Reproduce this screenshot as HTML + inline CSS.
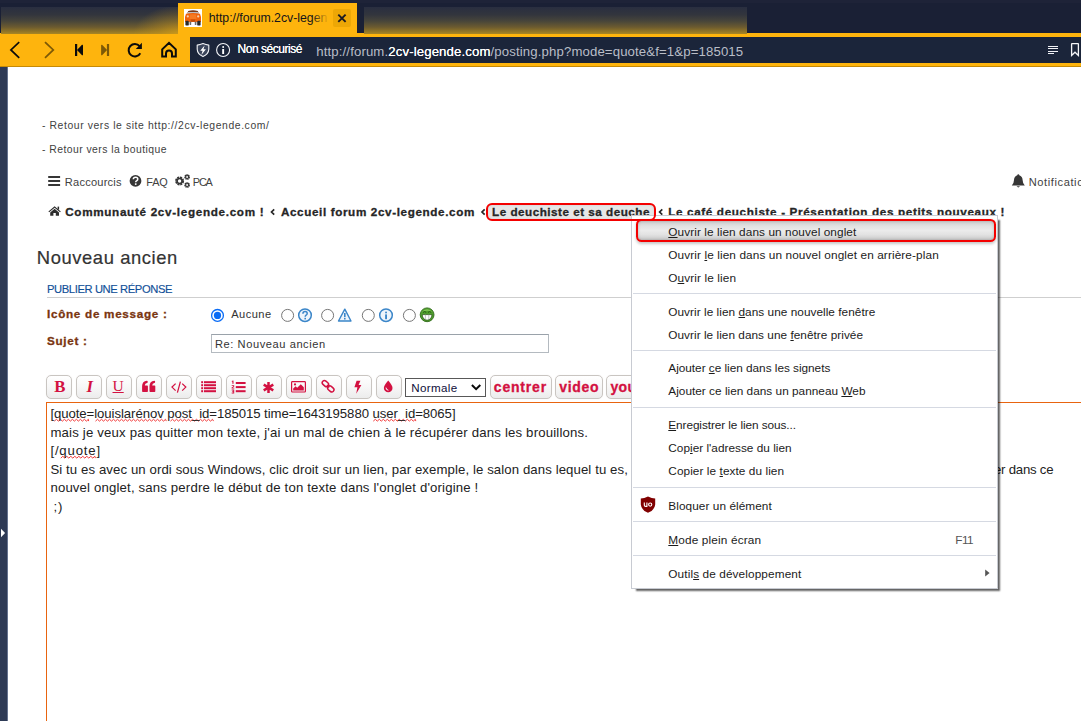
<!DOCTYPE html>
<html lang="fr">
<head>
<meta charset="utf-8">
<title>forum.2cv-legende.com - Nouveau ancien</title>
<style>
html,body{margin:0;padding:0;}
body{width:1081px;height:721px;overflow:hidden;position:relative;background:#fff;font-family:"Liberation Sans",sans-serif;color:#000;}
.abs{position:absolute;}
svg.abs{overflow:visible;}
.t{position:absolute;white-space:nowrap;line-height:1;}
u{text-decoration:underline;text-underline-offset:.6px;text-decoration-thickness:1px;}
.sq{text-decoration:underline wavy #f03030;text-decoration-thickness:1px;text-underline-offset:2.5px;text-decoration-skip-ink:none;}
/* ---------- browser chrome ---------- */
#tabbar{left:0;top:0;width:1081px;height:33px;background:linear-gradient(#1e2338 0,#1e2338 3px,#1a2035 3px,#1a2035 100%);}
#toolbar{left:0;top:33px;width:1081px;height:33px;background:#feb40d;border-bottom:1px solid #c68a06;}
#urlbar{left:190px;top:37px;width:891px;height:26px;background:#1b253a;}
#tab{left:178px;top:3px;width:179px;height:31px;background:#feb40d;}
.blur{background:linear-gradient(to bottom,#292e40 0%,#32353d 28%,#47453a 52%,#6b5a30 74%,#8f7427 90%,#a98623 100%);}
#blur1{left:1px;top:7px;width:177.5px;height:27px;}
#blur1:after{content:"";position:absolute;right:0;top:0;width:60px;height:27px;background:radial-gradient(ellipse 46px 30px at 100% 105%,rgba(215,160,22,.75) 0%,rgba(205,152,24,.4) 45%,rgba(200,150,25,0) 100%);}
#blur2{left:364px;top:7px;width:383px;height:27px;}
#closebg{left:333px;top:9px;width:18px;height:18px;background:#eda706;border-radius:2px;}
#favicon{left:184px;top:9px;width:18px;height:18px;background:#fff;}
#tabfade{left:312px;top:8px;width:20px;height:20px;background:linear-gradient(to right,rgba(254,180,13,0),#feb40d 85%);}
/* ---------- page ---------- */
#side{left:0;top:67px;width:7px;height:654px;background:#2e3a55;border-right:1px solid #66738f;}
#hline{left:47px;top:297px;width:1040px;height:1px;background:#cfcfcf;}
#subj{left:211px;top:334px;width:336px;height:17px;border:1px solid #b4bac0;border-top-color:#9aa2aa;background:#fff;}
.radio{position:absolute;width:12px;height:12px;border:1px solid #767676;border-radius:50%;background:#fff;box-sizing:border-box;}
/* ---------- editor ---------- */
.btn{position:absolute;top:375px;height:24px;width:26px;box-sizing:border-box;border:1px solid #c9c5c1;border-radius:5px;background:linear-gradient(#ffffff 0%,#f7f7f7 50%,#ececec 100%);box-shadow:0 0 1px 0 #e8e6e4;}
#sel{left:405px;top:378px;width:81px;height:19px;box-sizing:border-box;border:1px solid #585858;border-radius:0;background:#fff;}
#ta{left:46px;top:402px;width:1100px;height:400px;border:1px solid #e8640f;background:#fff;}
/* ---------- context menu ---------- */
#menu{left:631px;top:215px;width:367px;height:374px;box-sizing:border-box;background:#fff;border:1px solid #c8cbd2;box-shadow:3.5px 3.5px 1.6px -1.5px rgba(0,0,0,.6);}
.sep{position:absolute;left:633px;width:363px;height:1px;background:#d5d9e2;}
.red{position:absolute;border:2px solid #f40000;box-sizing:border-box;}
#red1{left:486px;top:202.6px;width:170px;height:18.6px;border-radius:6px;}
#red1fill{left:487px;top:203.6px;width:168px;height:16.6px;border-radius:5px;background:#e6e6e6;box-shadow:inset 0 0 3px rgba(0,0,0,.22);}
#red2{left:636px;top:219.2px;width:359.7px;height:23px;border-radius:5.5px;background:linear-gradient(#cdcdcd 0%,#e2e2e2 28%,#ebebeb 50%,#e2e2e2 72%,#c9c9c9 100%);box-shadow:inset 0 0 3px 0 rgba(0,0,0,.22),0 1.5px 3px rgba(0,0,0,.22);}
</style>
</head>
<body>

<!-- ================= browser chrome ================= -->
<div class="abs" id="tabbar"></div>
<div class="abs" id="toolbar"></div>
<div class="abs blur" id="blur1"></div>
<div class="abs blur" id="blur2"></div>
<div class="abs" id="tab"></div>
<div class="abs" id="favicon"></div>
<div class="abs" id="closebg"></div>
<div class="abs" id="urlbar"></div>
<svg class="abs" style="left:0;top:0" width="1081" height="70" viewBox="0 0 1081 70">
 <!-- back / forward -->
 <path d="M18.6 42.6 L10.9 49.9 L18.6 57.2" fill="none" stroke="#0b0b0b" stroke-width="1.7" stroke-linecap="square"/>
 <path d="M45.6 42.6 L53.3 49.9 L45.6 57.2" fill="none" stroke="#7d5906" stroke-width="1.7" stroke-linecap="square"/>
 <!-- rewind / fast forward -->
 <rect x="75" y="44" width="2.2" height="12" fill="#0b0b0b"/>
 <path d="M77 50 L82 44.8 Q83 44.4 83 45.6 L83 54.4 Q83 55.6 82 55.2 Z" fill="#0b0b0b"/>
 <rect x="106.9" y="44" width="2.2" height="12" fill="#7d5906"/>
 <path d="M107.1 50 L102.1 44.8 Q101.1 44.4 101.1 45.6 L101.1 54.4 Q101.1 55.6 102.1 55.2 Z" fill="#7d5906"/>
 <!-- reload -->
 <path d="M139.6 46.2 A6.2 6.2 0 1 0 140.3 53.2" fill="none" stroke="#0b0b0b" stroke-width="2"/>
 <path d="M141.9 42.8 L141.9 48.9 L135.8 48.9 Z" fill="#0b0b0b"/>
 <!-- home -->
 <path d="M162.2 56.6 L162.2 49.4 L169 42.9 L175.8 49.4 L175.8 56.6 L172 56.6 L172 53.4 A3 3 0 0 0 166 53.4 L166 56.6 Z" fill="none" stroke="#0b0b0b" stroke-width="2" stroke-linejoin="miter"/>
 <!-- favicon car -->
 <g>
  <path d="M188.2 11 Q193 9.4 197.8 11 L198.6 13 L187.4 13 Z" fill="#7b3a18"/>
  <path d="M187.8 11.9 L198.2 11.9 L199 14.2 L187 14.2 Z" fill="#b9bdc0"/>
  <path d="M186 13.8 Q193 12.2 200 13.8 Q201.8 17 201 22 L185 22 Q184.2 17 186 13.8 Z" fill="#f0620c"/>
  <path d="M190 14.6 Q193 13.8 196 14.6 L196.6 19 L189.4 19 Z" fill="#f57a22"/>
  <circle cx="187.8" cy="16.4" r="1.1" fill="#f3d4b4"/>
  <circle cx="198.2" cy="16.4" r="1.1" fill="#f3d4b4"/>
  <rect x="185.4" y="20.8" width="3.4" height="4.8" rx="1.2" fill="#2a2a2a"/>
  <rect x="197.2" y="20.8" width="3.4" height="4.8" rx="1.2" fill="#2a2a2a"/>
  <rect x="189.6" y="21.6" width="1.6" height="3.4" rx=".6" fill="#6d6d6d"/>
  <rect x="194.8" y="21.6" width="1.6" height="3.4" rx=".6" fill="#6d6d6d"/>
  <path d="M190.8 19.6 L195.2 19.6 L194.7 21.8 L191.3 21.8 Z" fill="#c04c08"/>
 </g>
 <!-- tab close -->
 <path d="M338.3 14.6 L345.6 21.9 M345.6 14.6 L338.3 21.9" stroke="#1c1b22" stroke-width="1.9" fill="none"/>
 <!-- shield -->
 <path d="M203 43.6 Q206 44.9 208.8 45.1 L208.8 49.2 Q208.6 54 203 56.6 Q197.4 54 197.2 49.2 L197.2 45.1 Q200 44.9 203 43.6 Z" fill="#3b455b" stroke="#f4f5f8" stroke-width="1.1" stroke-linejoin="round"/>
 <path d="M204.6 45.4 L200.2 50.8 L202.6 50.8 L201.4 55 L205.9 49.2 L203.5 49.2 Z" fill="#fff"/>
 <!-- info -->
 <circle cx="223.1" cy="50" r="6.5" fill="none" stroke="#f4f5f8" stroke-width="1.1"/>
 <rect x="222.2" y="46.1" width="1.9" height="1.9" rx=".9" fill="#fff"/>
 <rect x="222.2" y="49" width="1.9" height="5" fill="#fff"/>
 <!-- reader view -->
 <g fill="#f0f1f5" shape-rendering="crispEdges">
 <rect x="1048" y="46" width="10" height="1"/>
 <rect x="1048" y="48" width="10" height="1"/>
 <rect x="1048" y="51" width="10" height="1"/>
 <rect x="1048" y="53" width="6" height="1"/>
 </g>
 <!-- bookmark -->
 <path d="M1071.6 55.4 L1071.6 44 Q1071.6 43.6 1072 43.6 L1078 43.6 Q1078.4 43.6 1078.4 44 L1078.4 55.4 L1075 52.2 Z" fill="none" stroke="#f4f5f8" stroke-width="1.3" stroke-linejoin="miter"/>
</svg>

<span class="t" style="left:208.70px;top:12.00px;font-size:12.3px;letter-spacing:-0.014px;color:#15141a;">http://forum.2cv-legen</span>
<span class="t" style="left:237.50px;top:43.00px;font-size:12.0px;letter-spacing:-0.460px;color:#fff;text-shadow:0 0 .4px #fff;">Non sécurisé</span>
<span class="t" style="left:316.30px;top:44.80px;font-size:13.2px;letter-spacing:0.124px;"><span style="color:#b9bdc7">http://forum.</span><span style="color:#fff;text-shadow:0 0 .5px #fff">2cv-legende.com</span><span style="color:#b9bdc7">/posting.php?mode=quote&amp;f=1&amp;p=185015</span></span>
<div class="abs" id="tabfade"></div>

<!-- ================= page ================= -->
<div class="abs" id="side"></div>
<div class="abs" id="hline"></div>
<div class="abs" id="subj"></div>
<div class="abs" id="ta"></div>
<div class="btn" style="left:46px"></div>
<div class="btn" style="left:76px"></div>
<div class="btn" style="left:106px"></div>
<div class="btn" style="left:136px"></div>
<div class="btn" style="left:166px"></div>
<div class="btn" style="left:196px"></div>
<div class="btn" style="left:226px"></div>
<div class="btn" style="left:256px"></div>
<div class="btn" style="left:286px"></div>
<div class="btn" style="left:316px"></div>
<div class="btn" style="left:346px"></div>
<div class="btn" style="left:376px"></div>
<div class="abs" id="sel"></div>
<div class="btn" style="left:490px;width:62px"></div>
<div class="btn" style="left:555px;width:47.5px"></div>
<div class="btn" style="left:606px;width:67px"></div>
<div class="abs" id="red1fill"></div>
<svg class="abs" style="left:0;top:0" width="1081" height="721" viewBox="0 0 1081 721">
 <!-- sidebar toggle arrow -->
 <path d="M1 528.8 L5.1 533 L1 537.3 Z" fill="#fff"/>
 <!-- hamburger -->
 <g fill="#363636">
  <rect x="48.2" y="176" width="11.9" height="2"/>
  <rect x="48.2" y="180" width="11.9" height="2"/>
  <rect x="48.2" y="184" width="11.9" height="2"/>
 </g>
 <!-- FAQ ? -->
 <circle cx="135.5" cy="180.9" r="5.9" fill="#363636"/>
 <path d="M133.3 179.3 Q133.4 177.3 135.6 177.3 Q137.8 177.3 137.8 179.1 Q137.8 180.2 136.6 180.9 Q135.7 181.4 135.7 182.3" fill="none" stroke="#fff" stroke-width="1.5"/>
 <rect x="134.9" y="183.3" width="1.6" height="1.6" fill="#fff"/>
 <!-- cogs -->
 <g fill="none" stroke="#363636">
  <circle cx="179.6" cy="181" r="3.4" stroke-width="2.2" stroke-dasharray="1.9 0.77" />
  <circle cx="179.6" cy="181" r="2.5" stroke-width="1.6"/>
  <circle cx="187.1" cy="177" r="2.1" stroke-width="1.5" stroke-dasharray="1.25 0.4"/>
  <circle cx="187.1" cy="177" r="1.5" stroke-width="1.2"/>
  <circle cx="187.1" cy="185" r="2.1" stroke-width="1.5" stroke-dasharray="1.25 0.4"/>
  <circle cx="187.1" cy="185" r="1.5" stroke-width="1.2"/>
 </g>
 <!-- bell -->
 <path d="M1018.3 174.2 Q1019.3 174.2 1019.3 175.3 Q1022.4 176.2 1022.6 180 Q1022.8 184 1024.8 185.6 L1011.8 185.6 Q1013.8 184 1014 180 Q1014.2 176.2 1017.3 175.3 Q1017.3 174.2 1018.3 174.2 Z" fill="#363636"/>
 <path d="M1016.6 186.3 Q1018.3 188.6 1020 186.3 Z" fill="#363636"/>
 <!-- breadcrumb home -->
 <path d="M54.6 206.2 L60.8 211.4 L60 212.3 L54.6 207.8 L49.2 212.3 L48.4 211.4 Z" fill="#2d2d2d"/>
 <path d="M54.6 208.7 L59 212.4 L59 215.8 L55.8 215.8 L55.8 213 L53.4 213 L53.4 215.8 L50.2 215.8 L50.2 212.4 Z" fill="#2d2d2d"/>
 <rect x="57.6" y="206.6" width="1.5" height="3" fill="#2d2d2d"/>

 <!-- radios -->
 <circle cx="217.5" cy="315.4" r="5.9" fill="#fff" stroke="#0a6cf5" stroke-width="1.3"/>
 <circle cx="217.5" cy="315.4" r="3.6" fill="#0a6cf5"/>
 <g fill="#fff" stroke="#767676" stroke-width="1">
  <circle cx="287.6" cy="315.4" r="6"/>
  <circle cx="327.6" cy="315.4" r="6"/>
  <circle cx="368.3" cy="315.4" r="6"/>
  <circle cx="409.4" cy="315.4" r="6"/>
 </g>
 <!-- ? topic icon -->
 <circle cx="305" cy="315.2" r="6.3" fill="#eef4fb" stroke="#3b86c9" stroke-width="1.5"/>
 <path d="M302.9 313.7 Q303 311.6 305.1 311.6 Q307.2 311.6 307.2 313.4 Q307.2 314.5 306.1 315.2 Q305.2 315.8 305.2 316.7" fill="none" stroke="#3b86c9" stroke-width="1.5"/>
 <rect x="304.4" y="317.8" width="1.6" height="1.6" fill="#3b86c9"/>
 <!-- warning -->
 <path d="M344.8 309.2 L351 321 L338.5 321 Z" fill="#eef4fb" stroke="#3b86c9" stroke-width="1.4" stroke-linejoin="round"/>
 <rect x="344" y="313" width="1.6" height="4.2" fill="#3b86c9"/>
 <rect x="344" y="318" width="1.6" height="1.5" fill="#3b86c9"/>
 <!-- info -->
 <circle cx="386" cy="315.2" r="6.3" fill="#eef4fb" stroke="#3b86c9" stroke-width="1.5"/>
 <rect x="385.1" y="311.5" width="1.9" height="1.9" rx=".9" fill="#3b86c9"/>
 <rect x="385.1" y="314.4" width="1.9" height="4.8" fill="#3b86c9"/>
 <!-- green smiley -->
 <circle cx="427.1" cy="314.8" r="6.9" fill="#4f9d2c" stroke="#2f6a18" stroke-width=".9"/>
 <path d="M421.6 312 Q427.1 306.5 432.6 312 Q427.1 309.6 421.6 312 Z" fill="#8ed060" opacity=".8"/>
 <path d="M423 312.4 Q424.6 310.8 426.2 312.4 M428 312.4 Q429.6 310.8 431.2 312.4" fill="none" stroke="#234f10" stroke-width=".9"/>
 <path d="M422.2 314.6 L432 314.6 Q431.6 319.8 427.1 320.2 Q422.6 319.8 422.2 314.6 Z" fill="#fff" stroke="#234f10" stroke-width=".7"/>
 <path d="M425.4 314.6 L425.4 319.8 M428.8 314.6 L428.8 319.8" stroke="#9a9a9a" stroke-width=".6"/>

 <!-- ===== toolbar button icons ===== -->
 <g fill="#d31141">
  <!-- quote -->
  <path d="M142.1 391.2 L142.1 386 Q142.2 381.4 146.9 380.8 Q147.7 380.8 147.7 381.6 L147.7 382.2 Q147.7 382.8 147 382.9 Q144.9 383.3 144.8 385.5 L147.2 385.5 Q147.9 385.5 147.9 386.2 L147.9 391.2 Q147.9 391.9 147.2 391.9 L142.8 391.9 Q142.1 391.9 142.1 391.2 Z"/>
  <path d="M149.5 391.2 L149.5 386 Q149.6 381.4 154.3 380.8 Q155.1 380.8 155.1 381.6 L155.1 382.2 Q155.1 382.8 154.4 382.9 Q152.3 383.3 152.2 385.5 L154.6 385.5 Q155.3 385.5 155.3 386.2 L155.3 391.2 Q155.3 391.9 154.6 391.9 L150.2 391.9 Q149.5 391.9 149.5 391.2 Z"/>
  <!-- list -->
  <rect x="201.2" y="381.2" width="1.9" height="2"/><rect x="204" y="381.2" width="12" height="2"/>
  <rect x="201.2" y="384.2" width="1.9" height="2"/><rect x="204" y="384.2" width="12" height="2"/>
  <rect x="201.2" y="387.2" width="1.9" height="2"/><rect x="204" y="387.2" width="12" height="2"/>
  <rect x="201.2" y="390.2" width="1.9" height="2"/><rect x="204" y="390.2" width="12" height="2"/>
  <!-- numbered list -->
  <rect x="235.8" y="382" width="9.8" height="2"/>
  <rect x="235.8" y="386.1" width="9.8" height="2"/>
  <rect x="235.8" y="390.2" width="9.8" height="2"/>
  <rect x="232.4" y="380.6" width="1.1" height="3.2"/><rect x="231.8" y="380.9" width="1" height=".9"/>
  <path d="M231.7 385.2 L234.2 385.2 L234.2 386.7 L232.6 387.8 L234.3 387.8 L234.3 388.6 L231.6 388.6 L231.6 387.6 L233.3 386.4 L233.3 386 L231.7 386 Z"/>
  <path d="M231.7 389.6 L234.2 389.6 L234.2 393.4 L231.7 393.4 L231.7 392.6 L233.3 392.6 L233.3 391.8 L232.2 391.8 L232.2 391.1 L233.3 391.1 L233.3 390.4 L231.7 390.4 Z"/>
  <!-- bolt -->
  <path d="M356.6 380.8 L360.4 380.8 L358.6 385 L361.4 385 L356.2 393.8 L357.4 387.2 L354.4 387.2 Z"/>
  <!-- drop -->
  <path d="M388.2 380.6 Q392.5 385.6 392.5 388 A4.3 4.3 0 0 1 383.9 388 Q383.9 385.6 388.2 380.6 Z"/>
 </g>
 <path d="M386 388 Q386 390 388 390.2" fill="none" stroke="#fff" stroke-width="1" stroke-linecap="round"/>
 <!-- code </> -->
 <path d="M175.6 383.6 L172 387.1 L175.6 390.6 M182.2 383.6 L185.8 387.1 L182.2 390.6 M180.4 381.6 L177.4 392.6" fill="none" stroke="#d31141" stroke-width="1.25"/>
 <!-- asterisk -->
 <path d="M268.5 382 L268.5 393 M263.7 384.7 L273.3 390.3 M273.3 384.7 L263.7 390.3" fill="none" stroke="#d31141" stroke-width="2.5"/>
 <!-- image -->
 <rect x="291.6" y="381.7" width="13.8" height="10.3" rx=".8" fill="none" stroke="#d31141" stroke-width="1.2"/>
 <path d="M293.2 390.4 L293.2 388.6 L295.6 386.2 L297.2 387.8 L300.8 384.2 L303.8 387.2 L303.8 390.4 Z" fill="#d31141"/>
 <circle cx="295" cy="384.4" r="1.1" fill="#d31141"/>
 <!-- link -->
 <g fill="none" stroke="#d31141" stroke-width="1.45">
  <rect x="-2.2" y="-3.5" width="4.4" height="7" rx="2.2" transform="translate(325.4 383.6) rotate(-48)"/>
  <rect x="-2.2" y="-3.5" width="4.4" height="7" rx="2.2" transform="translate(330.8 388.9) rotate(-48)"/>
 </g>
 <path d="M326.9 385.1 L329.3 387.4" stroke="#d31141" stroke-width="1.5" fill="none"/>
 <!-- select chevron -->
 <path d="M471.9 385 L476.1 389.2 L480.3 385" fill="none" stroke="#0a0a0a" stroke-width="2"/>
 <!-- breadcrumb chevrons -->
 <path d="M274.2 209.3 L271.5 212 L274.2 214.7" fill="none" stroke="#262626" stroke-width="1.7"/>
 <path d="M484.7 209.3 L482.0 212 L484.7 214.7" fill="none" stroke="#262626" stroke-width="1.7"/>
 <path d="M662.3 209.3 L659.6 212 L662.3 214.7" fill="none" stroke="#262626" stroke-width="1.7"/>
 <!-- spellcheck squiggles -->
 <path d="M54.4 421.1 L56.4 419.3 L58.4 421.1 L60.4 419.3 L62.4 421.1 L64.4 419.3 L66.4 421.1 L68.4 419.3 L70.4 421.1 L72.4 419.3 L74.4 421.1 L76.4 419.3 L78.4 421.1 L80.4 419.3 L82.4 421.1 L84.4 419.3 L86.4 421.1 L88.4 419.3 L88.6 421.1" fill="none" stroke="#f23a3a" stroke-width="1" stroke-linejoin="round"/>
 <path d="M95.5 421.1 L97.5 419.3 L99.5 421.1 L101.5 419.3 L103.5 421.1 L105.5 419.3 L107.5 421.1 L109.5 419.3 L111.5 421.1 L113.5 419.3 L115.5 421.1 L117.5 419.3 L119.5 421.1 L121.5 419.3 L123.5 421.1 L125.5 419.3 L127.5 421.1 L129.5 419.3 L131.5 421.1 L133.5 419.3 L135.5 421.1 L137.5 419.3 L139.5 421.1 L141.5 419.3 L143.5 421.1 L145.5 419.3 L147.5 421.1 L149.5 419.3 L151.5 421.1 L153.5 419.3 L155.5 421.1 L157.5 419.3 L159.5 421.1 L161.5 419.3 L163.5 421.1 L165.5 419.3 L166.3 421.1" fill="none" stroke="#f23a3a" stroke-width="1" stroke-linejoin="round"/>
 <path d="M170.5 421.1 L172.5 419.3 L174.5 421.1 L176.5 419.3 L178.5 421.1 L180.5 419.3 L182.5 421.1 L184.5 419.3 L186.5 421.1 L188.5 419.3 L190.5 421.1 L192.5 419.3 L194.5 421.1 L196.5 419.3 L198.5 421.1 L200.5 419.3 L202.5 421.1 L204.5 419.3 L206.5 421.1 L208.5 419.3 L210.5 421.1 L212.5 419.3 L213.5 421.1" fill="none" stroke="#f23a3a" stroke-width="1" stroke-linejoin="round"/>
 <path d="M373.3 421.1 L375.3 419.3 L377.3 421.1 L379.3 419.3 L381.3 421.1 L383.3 419.3 L385.3 421.1 L387.3 419.3 L389.3 421.1 L391.3 419.3 L393.3 421.1 L395.3 419.3 L397.3 421.1 L399.3 419.3 L401.3 421.1 L403.3 419.3 L405.3 421.1 L407.3 419.3 L409.3 421.1 L411.3 419.3 L413.3 421.1 L415.3 419.3 L415.8 421.1" fill="none" stroke="#f23a3a" stroke-width="1" stroke-linejoin="round"/>
 <path d="M60.8 458.1 L62.8 456.3 L64.8 458.1 L66.8 456.3 L68.8 458.1 L70.8 456.3 L72.8 458.1 L74.8 456.3 L76.8 458.1 L78.8 456.3 L80.8 458.1 L82.8 456.3 L84.8 458.1 L86.8 456.3 L88.8 458.1 L90.8 456.3 L92.8 458.1 L94.8 456.3 L95.5 458.1" fill="none" stroke="#f23a3a" stroke-width="1" stroke-linejoin="round"/>
</svg>

<span class="t" style="left:42.00px;top:120.70px;font-size:10.4px;letter-spacing:0.589px;color:#414141;">- Retour vers le site http://2cv-legende.com/</span>
<span class="t" style="left:42.00px;top:144.80px;font-size:10.4px;letter-spacing:0.446px;color:#414141;">- Retour vers la boutique</span>
<span class="t" style="left:64.80px;top:176.80px;font-size:11.1px;letter-spacing:0.209px;color:#414141;">Raccourcis</span>
<span class="t" style="left:146.20px;top:176.80px;font-size:10.9px;letter-spacing:-0.107px;color:#414141;">FAQ</span>
<span class="t" style="left:192.80px;top:176.80px;font-size:10.9px;letter-spacing:-1.164px;color:#414141;">PCA</span>
<span class="t" style="left:1028.70px;top:176.80px;font-size:11.1px;letter-spacing:0.593px;color:#414141;">Notifications</span>
<span class="t" style="left:65.20px;top:205.80px;font-size:11.7px;letter-spacing:0.685px;font-weight:bold;color:#262626;-webkit-text-stroke:.3px #262626;">Communauté 2cv-legende.com !</span>
<span class="t" style="left:280.90px;top:205.80px;font-size:11.7px;letter-spacing:0.621px;font-weight:bold;color:#262626;-webkit-text-stroke:.3px #262626;">Accueil forum 2cv-legende.com</span>
<span class="t" style="left:492.00px;top:205.80px;font-size:11.7px;letter-spacing:0.500px;font-weight:bold;color:#262626;-webkit-text-stroke:.3px #262626;">Le deuchiste et sa deuche</span>
<span class="t" style="left:668.20px;top:205.80px;font-size:11.7px;letter-spacing:0.645px;font-weight:bold;color:#262626;-webkit-text-stroke:.3px #262626;">Le café deuchiste - Présentation des petits nouveaux !</span>
<span class="t" style="left:36.80px;top:249.40px;font-size:18.4px;letter-spacing:0.578px;color:#333;-webkit-text-stroke:.2px #333;">Nouveau ancien</span>
<span class="t" style="left:47.00px;top:283.80px;font-size:11.2px;letter-spacing:-0.387px;color:#115098;-webkit-text-stroke:.15px #115098;">PUBLIER UNE RÉPONSE</span>
<span class="t" style="left:47.00px;top:308.20px;font-size:11.7px;letter-spacing:0.710px;font-weight:bold;color:#7a3510;-webkit-text-stroke:.3px #7a3510;">Icône de message :</span>
<span class="t" style="left:47.00px;top:335.20px;font-size:11.7px;letter-spacing:0.696px;font-weight:bold;color:#7a3510;-webkit-text-stroke:.3px #7a3510;">Sujet :</span>
<span class="t" style="left:231.20px;top:309.20px;font-size:11.1px;letter-spacing:0.469px;color:#333;">Aucune</span>
<span class="t" style="left:215.00px;top:339.00px;font-size:11.1px;letter-spacing:0.567px;color:#333;">Re: Nouveau ancien</span>
<span class="t" style="left:54.20px;top:379.20px;font-size:16.8px;font-weight:bold;font-family:'Liberation Serif',serif;color:#d31141;">B</span>
<span class="t" style="left:86.50px;top:379.20px;font-size:16.8px;font-weight:bold;font-style:italic;font-family:'Liberation Serif',serif;color:#d31141;">I</span>
<span class="t" style="left:112.50px;top:378.20px;font-size:15.5px;font-family:'Liberation Serif',serif;color:#d31141;"><u>U</u></span>
<span class="t" style="left:411.30px;top:382.00px;font-size:11.6px;letter-spacing:0.340px;color:#0e0e3a;">Normale</span>
<span class="t" style="left:493.80px;top:379.70px;font-size:14px;letter-spacing:0.813px;font-weight:bold;color:#d31141;-webkit-text-stroke:.3px #d31141;">centrer</span>
<span class="t" style="left:559.20px;top:379.70px;font-size:14px;letter-spacing:0.697px;font-weight:bold;color:#d31141;-webkit-text-stroke:.3px #d31141;">video</span>
<span class="t" style="left:610.50px;top:379.70px;font-size:14px;letter-spacing:0.307px;font-weight:bold;color:#d31141;-webkit-text-stroke:.3px #d31141;">youtube</span>
<span class="t" style="left:50.40px;top:407.00px;font-size:13.2px;letter-spacing:-0.075px;color:#222;">[quote=louislarénov post_id=185015 time=1643195880 user_id=8065]</span>
<span class="t" style="left:50.40px;top:425.50px;font-size:13.2px;letter-spacing:0.177px;color:#222;">mais je veux pas quitter mon texte, j'ai un mal de chien à le récupérer dans les brouillons.</span>
<span class="t" style="left:50.40px;top:444.00px;font-size:13.2px;letter-spacing:0.824px;color:#222;">[/quote]</span>
<span class="t" style="left:50.40px;top:462.50px;font-size:13.2px;letter-spacing:0.095px;color:#222;">Si tu es avec un ordi sous Windows, clic droit sur un lien, par exemple, le salon dans lequel tu es,</span>
<span class="t" style="left:994.00px;top:462.50px;font-size:13.2px;letter-spacing:-0.227px;color:#222;">er dans ce</span>
<span class="t" style="left:50.40px;top:481.00px;font-size:13.2px;letter-spacing:0.158px;color:#222;">nouvel onglet, sans perdre le début de ton texte dans l'onglet d'origine !</span>
<span class="t" style="left:53.50px;top:499.50px;font-size:13.2px;letter-spacing:0.836px;color:#222;">;)</span>

<!-- ================= context menu ================= -->
<div class="abs" id="menu"></div>
<div class="sep" style="top:293px"></div>
<div class="sep" style="top:350px"></div>
<div class="sep" style="top:407px"></div>
<div class="sep" style="top:487px"></div>
<div class="sep" style="top:521px"></div>
<div class="sep" style="top:555px"></div>
<div class="abs red" id="red2"></div>
<div class="abs red" id="red1"></div>
<svg class="abs" style="left:0;top:0" width="1081" height="721" viewBox="0 0 1081 721">
 <!-- uBlock shield -->
 <path d="M648 496.6 Q651.8 498.6 655.2 498.6 L655.2 504.6 Q654.8 510.2 648 512.8 Q641.2 510.2 640.8 504.6 L640.8 498.6 Q644.2 498.6 648 496.6 Z" fill="#800000"/>
 <path d="M644.3 502.6 L644.3 505.2 Q644.3 506.4 645.6 506.4 L646.9 506.4 L646.9 502.6" fill="none" stroke="#fff" stroke-width="1.1"/>
 <circle cx="650.2" cy="504.6" r="1.6" fill="none" stroke="#fff" stroke-width="1.1"/>
 <!-- submenu arrow -->
 <path d="M985.2 569.6 L989.6 573.1 L985.2 576.6 Z" fill="#555"/>
</svg>

<span class="t" style="left:668.30px;top:226.80px;font-size:11.8px;letter-spacing:0.087px;color:#1b1b1b;"><u>O</u>uvrir le lien dans un nouvel onglet</span>
<span class="t" style="left:668.30px;top:249.90px;font-size:11.8px;letter-spacing:0.107px;color:#1b1b1b;">Ouvrir <u>l</u>e lien dans un nouvel onglet en arrière-plan</span>
<span class="t" style="left:668.30px;top:272.80px;font-size:11.8px;letter-spacing:0.119px;color:#1b1b1b;">O<u>u</u>vrir le lien</span>
<span class="t" style="left:668.30px;top:306.50px;font-size:11.8px;letter-spacing:0.044px;color:#1b1b1b;">Ouvrir le lien <u>d</u>ans une nouvelle fenêtre</span>
<span class="t" style="left:668.30px;top:329.50px;font-size:11.8px;letter-spacing:0.033px;color:#1b1b1b;">Ouvrir le lien dans une <u>f</u>enêtre privée</span>
<span class="t" style="left:668.30px;top:363.20px;font-size:11.8px;letter-spacing:-0.020px;color:#1b1b1b;">Ajouter <u>c</u>e lien dans les signets</span>
<span class="t" style="left:668.30px;top:386.20px;font-size:11.8px;letter-spacing:0.018px;color:#1b1b1b;">Ajouter ce lien dans un panneau <u>W</u>eb</span>
<span class="t" style="left:668.30px;top:420.10px;font-size:11.8px;letter-spacing:-0.083px;color:#1b1b1b;"><u>E</u>nregistrer le lien sous...</span>
<span class="t" style="left:668.30px;top:443.10px;font-size:11.8px;letter-spacing:0.015px;color:#1b1b1b;">Cop<u>i</u>er l'adresse du lien</span>
<span class="t" style="left:668.30px;top:466.00px;font-size:11.8px;letter-spacing:0.075px;color:#1b1b1b;">Copier le <u>t</u>exte du lien</span>
<span class="t" style="left:668.30px;top:501.00px;font-size:11.8px;letter-spacing:0.069px;color:#1b1b1b;">Bloquer un élément</span>
<span class="t" style="left:668.30px;top:535.20px;font-size:11.8px;letter-spacing:0.151px;color:#1b1b1b;"><u>M</u>ode plein écran</span>
<span class="t" style="left:668.30px;top:568.80px;font-size:11.8px;letter-spacing:0.112px;color:#1b1b1b;">Outil<u>s</u> de développement</span>
<span class="t" style="left:955.30px;top:535.20px;font-size:11.8px;letter-spacing:-0.596px;color:#555;">F11</span>

</body>
</html>
